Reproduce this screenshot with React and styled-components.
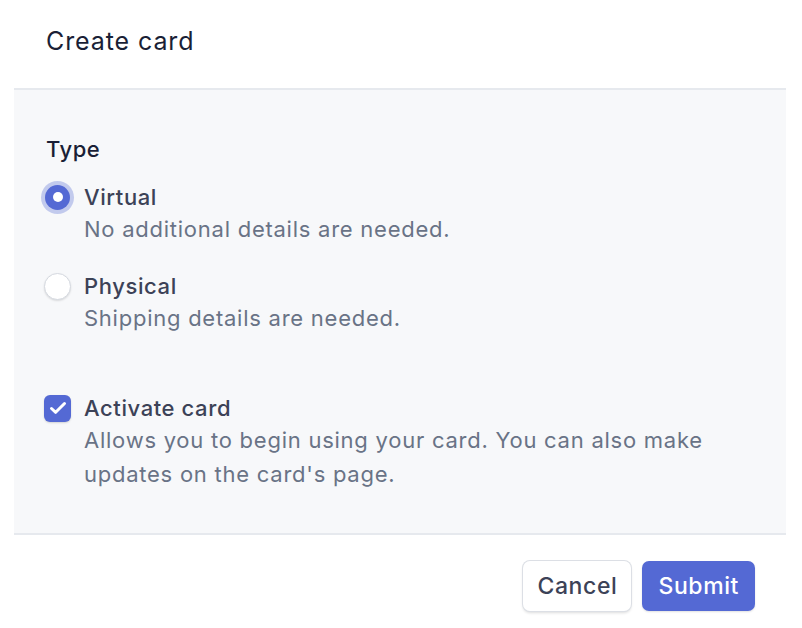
import React from 'react'
import styled, { createGlobalStyle } from 'styled-components'

const GlobalStyle = createGlobalStyle`
  html, body {
    margin: 0;
    padding: 0;
    background: #ffffff;
  }
  body {
    font-family: Inter, "Noto Sans", "Liberation Sans", sans-serif;
    -webkit-font-smoothing: antialiased;
  }
`

const Dialog = styled.div`
  width: 802px;
  height: 628px;
  display: flex;
  flex-direction: column;
  background: #ffffff;
`

const Header = styled.div`
  height: 88px;
  padding: 0 46px;
  display: flex;
  align-items: center;
  box-sizing: border-box;
  padding-bottom: 6px;
`

const Title = styled.h1`
  margin: 0;
  font-size: 25px;
  font-weight: 400;
  color: #1a1f36;
  letter-spacing: 0.9px;
`

const Body = styled.div`
  margin: 0 16px 0 14px;
  background: #f7f8fa;
  border-top: 2px solid #e6e9ee;
  border-bottom: 2px solid #e6e9ee;
  padding: 45px 32px 42px 30px;
  display: flex;
  flex-direction: column;
`

const SectionLabel = styled.div`
  font-size: 22px;
  font-weight: 500;
  color: #1a1f36;
  line-height: 28px;
  letter-spacing: 0.5px;
  margin: 0 0 19px 2px;
`

const Option = styled.label`
  display: grid;
  grid-template-columns: 27px 1fr;
  column-gap: 13px;
  align-items: center;
  margin-top: ${(p) => p.gap || 0}px;
`

const OptionTitle = styled.span`
  font-size: 22px;
  font-weight: 500;
  color: #3c4257;
  line-height: 30px;
  letter-spacing: 0.6px;
`

const OptionHint = styled.span`
  grid-column: 2;
  font-size: 22px;
  color: #697386;
  line-height: 34px;
  letter-spacing: 0.75px;
`

const Radio = styled.span`
  width: ${(p) => (p.checked ? 25 : 27)}px;
  height: ${(p) => (p.checked ? 25 : 27)}px;
  margin-left: ${(p) => (p.checked ? 1 : 0)}px;
  border-radius: 50%;
  box-sizing: border-box;
  position: relative;
  background: ${(p) => (p.checked ? '#5469d4' : '#ffffff')};
  border: ${(p) => (p.checked ? 'none' : '1px solid #d5d9e0')};
  box-shadow: ${(p) =>
    p.checked
      ? '0 0 0 4px rgba(84, 105, 212, 0.32)'
      : '0 1px 2px rgba(0, 0, 0, 0.12)'};
  &::after {
    content: '';
    display: ${(p) => (p.checked ? 'block' : 'none')};
    position: absolute;
    left: 50%;
    top: 50%;
    width: 10px;
    height: 10px;
    margin: -5px 0 0 -5px;
    border-radius: 50%;
    background: #ffffff;
  }
`

const Checkbox = styled.span`
  width: 27px;
  height: 27px;
  border-radius: 6px;
  background: #5469d4;
  display: flex;
  align-items: center;
  justify-content: center;
  box-shadow: 0 1px 2px rgba(0, 0, 0, 0.15);
`

const Footer = styled.div`
  display: flex;
  justify-content: flex-end;
  gap: 11px;
  padding: 26px 47px 0 0;
`

const Button = styled.button`
  height: 50px;
  padding: 0 ${(p) => (p.primary ? 16 : 14)}px;
  border-radius: 7px;
  font-family: inherit;
  font-size: 23px;
  font-weight: 500;
  letter-spacing: 0.6px;
  cursor: pointer;
  color: ${(p) => (p.primary ? '#ffffff' : '#3c4257')};
  background: ${(p) => (p.primary ? '#5469d4' : '#ffffff')};
  border: none;
  box-shadow: ${(p) =>
    p.primary
      ? '0 1px 2px rgba(0, 0, 0, 0.12)'
      : '0 0 0 1px #dcdfe5, 0 2px 3px rgba(0, 0, 0, 0.14)'};
`

export default function App() {
  return (
    <Dialog>
      <GlobalStyle />
      <Header>
        <Title>Create card</Title>
      </Header>
      <Body>
        <SectionLabel>Type</SectionLabel>
        <Option>
          <Radio checked />
          <OptionTitle>Virtual</OptionTitle>
          <OptionHint>No additional details are needed.</OptionHint>
        </Option>
        <Option gap={25}>
          <Radio />
          <OptionTitle>Physical</OptionTitle>
          <OptionHint>Shipping details are needed.</OptionHint>
        </Option>
        <Option gap={58}>
          <Checkbox>
            <svg width="20" height="20" viewBox="0 0 20 20" fill="none">
              <path
                d="M3.5 10.5l4.2 3.8L16.5 5.5"
                stroke="#ffffff"
                strokeWidth="3"
                strokeLinecap="round"
                strokeLinejoin="round"
              />
            </svg>
          </Checkbox>
          <OptionTitle>Activate card</OptionTitle>
          <OptionHint>
            Allows you to begin using your card. You can also make
            <br />
            updates on the card's page.
          </OptionHint>
        </Option>
      </Body>
      <Footer>
        <Button>Cancel</Button>
        <Button primary>Submit</Button>
      </Footer>
    </Dialog>
  )
}
